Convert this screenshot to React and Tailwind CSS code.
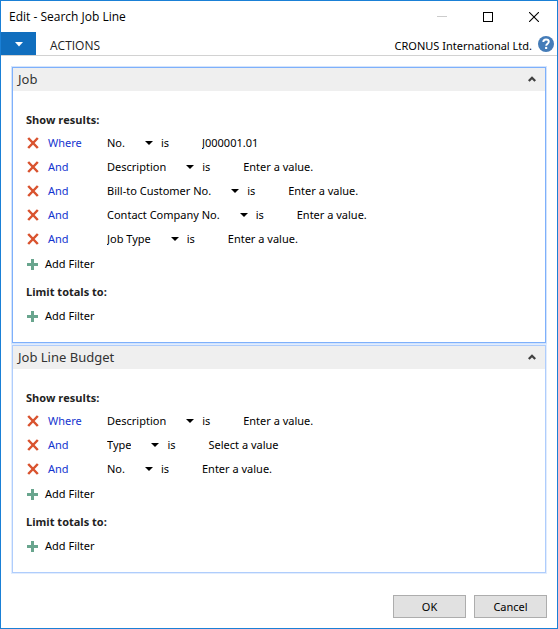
import React from "react";

const jobFields = ["No.", "Description", "Bill-to Customer No.", "Contact Company No.", "Job Type"];
const budgetFields = ["Description", "Type", "No."];

const jobFilters = [
  { field: "No.", value: "J000001.01" },
  { field: "Description", hint: "Enter a value." },
  { field: "Bill-to Customer No.", hint: "Enter a value." },
  { field: "Contact Company No.", hint: "Enter a value." },
  { field: "Job Type", hint: "Enter a value." },
];

const budgetFilters = [
  { field: "Description", hint: "Enter a value." },
  { field: "Type", hint: "Select a value" },
  { field: "No.", hint: "Enter a value." },
];

function RemoveIcon() {
  return (
    <svg width="12" height="12" viewBox="0 0 12 12" aria-hidden="true">
      <path d="M1.2 1 L10.8 11 M10.8 1 L1.2 11" stroke="#d9532f" strokeWidth="2.5" fill="none" />
    </svg>
  );
}

function PlusIcon() {
  return (
    <svg width="11" height="11" viewBox="0 0 11 11" aria-hidden="true" shapeRendering="crispEdges">
      <path d="M4 0h3v4h4v3h-4v4h-3v-4h-4v-3h4z" fill="#69a58e" />
    </svg>
  );
}

function FilterRow({ joiner, filter, fields }) {
  return (
    <li className="flex h-6 items-center pb-0.5">
      <button type="button" aria-label="Remove filter" className="ml-[14px] w-[21px] shrink-0">
        <RemoveIcon />
      </button>
      <button type="button" className="w-[58px] shrink-0 text-left text-[#1435cf]">
        {joiner}
      </button>
      <span className="relative flex shrink-0 items-center">
        <select
          aria-label="Field"
          defaultValue={filter.field}
          className="field-sizing-content h-5 appearance-none bg-transparent p-0 pl-px pr-[28px] outline-none"
        >
          {fields.map((f) => (
            <option key={f}>{f}</option>
          ))}
        </select>
        <svg
          className="pointer-events-none absolute right-0 top-2"
          width="8"
          height="4"
          viewBox="0 0 8 4"
          aria-hidden="true"
        >
          <path d="M0 0h8l-4 4z" fill="#000" />
        </svg>
      </span>
      <span className="ml-2 w-10 shrink-0">is</span>
      <input
        type="text"
        aria-label={`${filter.field} value`}
        defaultValue={filter.value}
        placeholder={filter.hint}
        className="h-5 w-20 min-w-0 grow bg-transparent pb-0.5 pl-px outline-none placeholder:text-black placeholder:opacity-100"
      />
    </li>
  );
}

function AddFilter() {
  return (
    <button type="button" className="ml-[14px] flex h-6 items-center gap-[7px]">
      <PlusIcon />
      Add Filter
    </button>
  );
}

function FilterGroup({ title, filters, fields, active }) {
  return (
    <section
      className={
        active
          ? "border border-[#7eb0fb] shadow-[0_0_0_1px_#d3e4fd]"
          : "border border-[#afcdfc] shadow-[0_0_0_1px_#e2edfe]"
      }
    >
      <header className="flex h-[23px] items-center justify-between bg-[#efefef] pb-0.5 pl-[5px] pr-2">
        <h2 className="text-[13px] leading-5 text-[#333]">{title}</h2>
        <button type="button" aria-label={`Collapse ${title}`} className="px-px">
          <svg width="8" height="6" viewBox="0 0 8 6" aria-hidden="true">
            <path d="M0.8 5 L4 1.8 L7.2 5" stroke="#404040" strokeWidth="2.3" fill="none" />
          </svg>
        </button>
      </header>
      <div className="pb-[14px] pt-[17px]">
        <h3 className="ml-[13px] h-6 font-['Open_Sans',sans-serif] font-bold leading-6 text-[#222]">Show results:</h3>
        <ul>
          {filters.map((f, i) => (
            <FilterRow key={f.field} joiner={i === 0 ? "Where" : "And"} filter={f} fields={fields} />
          ))}
        </ul>
        <AddFilter />
        <h3 className="ml-[13px] mt-1 h-6 font-['Open_Sans',sans-serif] font-bold leading-6 text-[#222]">Limit totals to:</h3>
        <AddFilter />
      </div>
    </section>
  );
}

export default function App() {
  return (
    <div className="flex min-h-screen flex-col border border-[#1a80d6] bg-white font-['Noto_Sans','Open_Sans',sans-serif] text-[11px] leading-4 text-black">
      <header className="flex h-[31px] items-center justify-between pl-2">
        <h1 className="font-['Open_Sans',sans-serif] text-[12px]">Edit - Search Job Line</h1>
        <div className="flex h-full">
          <button type="button" aria-label="Minimize" disabled className="grid w-[46px] place-items-center">
            <svg width="10" height="10" viewBox="0 0 10 10" shapeRendering="crispEdges">
              <rect x="0" y="4" width="10" height="1" fill="#ccc" />
            </svg>
          </button>
          <button type="button" aria-label="Maximize" className="grid w-[46px] place-items-center">
            <svg width="10" height="10" viewBox="0 0 10 10">
              <rect x="0.5" y="0.5" width="9" height="9" stroke="#000" fill="none" />
            </svg>
          </button>
          <button type="button" aria-label="Close" className="grid w-[46px] place-items-center">
            <svg width="10" height="10" viewBox="0 0 10 10">
              <path d="M0 0 L10 10 M10 0 L0 10" stroke="#000" strokeWidth="1.1" />
            </svg>
          </button>
        </div>
      </header>

      <nav className="flex h-6 items-center border-b border-[#d2d2d2]">
        <button type="button" aria-label="Application menu" className="grid h-full w-[35px] place-items-center bg-[#106ebe] pt-0.5">
          <svg width="8" height="5" viewBox="0 0 8 5">
            <path d="M0 0h8l-4 4.6z" fill="#fff" />
          </svg>
        </button>
        <button type="button" className="ml-[14px] mt-1 font-['Open_Sans',sans-serif] text-[12px] text-[#222]">
          ACTIONS
        </button>
        <span className="ml-auto mt-1">CRONUS International Ltd.</span>
        <button type="button" aria-label="Help" className="ml-[6px] mr-[3px]">
          <svg width="16" height="16" viewBox="0 0 16 16">
            <circle cx="8" cy="8" r="8" fill="#457cb8" />
            <path
              d="M5.3 6.1 C5.3 4.3 6.4 3.5 8 3.5 C9.7 3.5 10.8 4.4 10.8 5.8 C10.8 7.6 8.2 7.7 8.2 9.7"
              stroke="#fff"
              strokeWidth="1.9"
              fill="none"
            />
            <rect x="7.1" y="10.9" width="2.1" height="2.1" fill="#fff" />
          </svg>
        </button>
      </nav>

      <main className="flex flex-col gap-[2px] px-[11px] pt-[11px]">
        <FilterGroup title="Job" filters={jobFilters} fields={jobFields} active />
        <FilterGroup title="Job Line Budget" filters={budgetFilters} fields={budgetFields} />
      </main>

      <footer className="mt-auto flex justify-end gap-2 px-[10px] pb-[10px] pt-4">
        <button type="button" className="h-[23px] w-[73px] border border-[#adadad] bg-[#e1e1e1]">
          OK
        </button>
        <button type="button" className="h-[23px] w-[73px] border border-[#adadad] bg-[#e1e1e1]">
          Cancel
        </button>
      </footer>
    </div>
  );
}
